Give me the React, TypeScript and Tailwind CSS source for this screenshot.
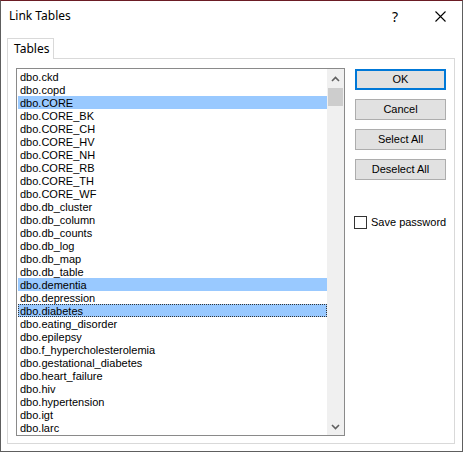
import React from "react";

const TABLES = [
  "dbo.ckd",
  "dbo.copd",
  "dbo.CORE",
  "dbo.CORE_BK",
  "dbo.CORE_CH",
  "dbo.CORE_HV",
  "dbo.CORE_NH",
  "dbo.CORE_RB",
  "dbo.CORE_TH",
  "dbo.CORE_WF",
  "dbo.db_cluster",
  "dbo.db_column",
  "dbo.db_counts",
  "dbo.db_log",
  "dbo.db_map",
  "dbo.db_table",
  "dbo.dementia",
  "dbo.depression",
  "dbo.diabetes",
  "dbo.eating_disorder",
  "dbo.epilepsy",
  "dbo.f_hypercholesterolemia",
  "dbo.gestational_diabetes",
  "dbo.heart_failure",
  "dbo.hiv",
  "dbo.hypertension",
  "dbo.igt",
  "dbo.larc",
];

const SELECTED = ["dbo.CORE", "dbo.dementia", "dbo.diabetes"];
const FOCUSED = "dbo.diabetes";

const BUTTONS = ["OK", "Cancel", "Select All", "Deselect All"];

function Chevron({ up }: { up: boolean }) {
  return (
    <svg width="9" height="6" viewBox="0 0 9 6">
      <path
        d={up ? "M1 5 L4.5 1.5 L8 5" : "M1 1 L4.5 4.5 L8 1"}
        fill="none"
        stroke="#606060"
        strokeWidth="1.6"
      />
    </svg>
  );
}

export default function App() {
  return (
    <div
      className="flex h-[452px] w-[463px] flex-col border-x border-b border-t border-[#5e5e5e] border-t-[#6b1c24] bg-white text-black"
      style={{ fontFamily: '"Liberation Sans", Arial, sans-serif' }}
    >
      {/* title bar */}
      <div className="flex h-[30px] items-center pl-[8px]">
        <span
          className="flex-1 text-[12px]"
          style={{ fontFamily: '"Noto Sans", "Open Sans", sans-serif' }}
        >
          Link Tables
        </span>
        <span
          className="mr-[37px] text-[14px]"
          style={{ fontFamily: '"Noto Sans", "Open Sans", sans-serif' }}
        >
          ?
        </span>
        <svg width="11" height="11" viewBox="0 0 11 11" className="mr-[16px]">
          <path d="M0.5 0.5 L10.5 10.5 M10.5 0.5 L0.5 10.5" stroke="#000" strokeWidth="1.1" />
        </svg>
      </div>

      {/* tabs */}
      <div className="flex flex-col pl-[6px] pr-[7px] pt-[7px]">
        <div
          className="relative z-10 -mb-px flex h-[21px] w-[47px] items-center border border-b-0 border-[#d9d9d9] bg-white pl-[6px] text-[12px]"
          style={{ fontFamily: '"Noto Sans", "Open Sans", sans-serif' }}
        >
          Tables
        </div>
        <div className="flex h-[386px] border border-[#d9d9d9] bg-white pl-[8px] pt-[9px]">
          {/* list box */}
          <div className="flex h-[368px] w-[329px] border border-[#8a8a8a] bg-white">
            <div className="flex flex-1 flex-col pl-[1px] pt-[1px]">
              {TABLES.map((name) => {
                const selected = SELECTED.includes(name);
                const focused = name === FOCUSED;
                return (
                  <div
                    key={name}
                    className={`h-[13px] pl-[2px] pt-[1px] text-[11px] leading-[13px] ${
                      selected ? "bg-[#99c9ff]" : ""
                    } ${focused ? "outline outline-1 -outline-offset-1 outline-dotted outline-[#333]" : ""}`}
                  >
                    {name}
                  </div>
                );
              })}
            </div>
            {/* scrollbar */}
            <div className="flex w-[17px] flex-col bg-[#f0f0f0]">
              <div className="flex h-[19px] items-center justify-center">
                <Chevron up />
              </div>
              <div className="mx-[1px] h-[18px] bg-[#cdcdcd]" />
              <div className="flex-1" />
              <div className="flex h-[17px] items-center justify-center">
                <Chevron up={false} />
              </div>
            </div>
          </div>

          {/* buttons */}
          <div className="ml-[10px] flex flex-col pt-[1px]">
            {BUTTONS.map((label, i) => (
              <button
                key={label}
                className={`mb-[9px] flex h-[21px] w-[91px] items-center justify-center bg-[#e1e1e1] text-[11px] ${
                  i === 0 ? "border-2 border-[#0078d7]" : "border border-[#adadad]"
                }`}
              >
                {label}
              </button>
            ))}
            <label className="-ml-px mt-[25px] flex items-center gap-[4px] text-[11px]">
              <span className="h-[13px] w-[13px] border border-[#333] bg-white" />
              Save password
            </label>
          </div>
        </div>
      </div>
    </div>
  );
}
